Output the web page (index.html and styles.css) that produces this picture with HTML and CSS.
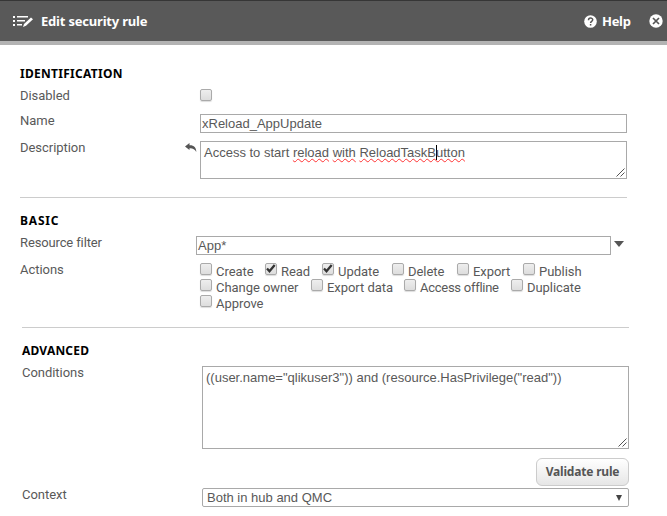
FILE: index.html
```html
<!DOCTYPE html>
<html lang="en">
<head>
<meta charset="utf-8">
<title>Edit security rule</title>
<link rel="stylesheet" href="styles.css">
</head>
<body>
<header class="bar">
  <svg class="edit-icon" width="21" height="13" viewBox="0 0 21 13"><path d="M0 1h2v2H0zM0 5h2v2H0zM0 9h2v2H0zM4 1h11v1.500H4zM4 5h8v1.500H4zM4 9h5v1.500H4z" fill="#fff"/><path d="M10 12l1-3 7-6.500 2 1.800-7 6.500z" fill="#fff"/></svg>
  <h1 class="title">Edit security rule</h1>
  <svg class="help-icon" width="13" height="13" viewBox="0 0 13 13"><circle cx="6.500" cy="6.500" r="6.300" fill="#fff"/><path d="M4.500 5.200C4.500 2.300 8.700 2.500 8.700 4.800c0 1.600-2.100 1.500-2.100 3.200M6.600 9v1.500" fill="none" stroke="#555" stroke-width="1.500"/></svg>
  <span class="help">Help</span>
  <svg class="close-icon" width="14" height="14" viewBox="0 0 14 14"><circle cx="7" cy="7" r="6.700" fill="#fff"/><path d="M4 4l6 6M10 4l-6 6" stroke="#555" stroke-width="1.700"/></svg>
</header>
<main>
  <section class="section identification">
    <h2 class="heading h-ident">IDENTIFICATION</h2>
    <div class="row disabled"><span class="label">Disabled</span><i class="check"></i></div>
    <div class="row name"><span class="label">Name</span><div class="field">xReload_AppUpdate</div></div>
    <div class="row description"><span class="label">Description</span>
      <svg class="undo" width="12" height="10" viewBox="0 0 12 10"><path d="M0 3.500L4.500 0v2.300C8.500 2 11.500 4.500 11.300 9 9.800 6 7.500 5 4.500 5.200V7z" fill="#555"/></svg>
      <div class="field area">Access to start <u>reload</u> <u>with</u> <u>ReloadTaskB<b class="cursor"></b>utton</u><svg class="grip" width="9" height="9" viewBox="0 0 9 9"><path d="M.5 8.500l8-8M4.500 8.500l4-4" stroke="#555"/></svg></div>
    </div>
  </section>
  <section class="section basic">
    <h2 class="heading h-basic">BASIC</h2>
    <div class="row filter"><span class="label">Resource filter</span><div class="field">App*</div><svg class="caret" width="10" height="6" viewBox="0 0 10 6"><path d="M0 0h10L5 6z" fill="#555"/></svg></div>
    <div class="row actions"><span class="label">Actions</span>
      <div class="options">
        <div class="option-row first">
          <span class="option"><i class="check"></i>Create</span>
          <span class="option"><i class="check on"><svg width="10" height="9" viewBox="0 0 10 9"><path d="M1 4.500l2.500 2.700L8.700 1" fill="none" stroke="#333" stroke-width="2.300"/></svg></i>Read</span>
          <span class="option"><i class="check on"><svg width="10" height="9" viewBox="0 0 10 9"><path d="M1 4.500l2.500 2.700L8.700 1" fill="none" stroke="#333" stroke-width="2.300"/></svg></i>Update</span>
          <span class="option"><i class="check"></i>Delete</span>
          <span class="option"><i class="check"></i>Export</span>
          <span class="option"><i class="check"></i>Publish</span>
        </div>
        <div class="option-row second">
          <span class="option"><i class="check"></i>Change owner</span>
          <span class="option"><i class="check"></i>Export data</span>
          <span class="option offline"><i class="check"></i>Access offline</span>
          <span class="option"><i class="check"></i>Duplicate</span>
        </div>
        <div class="option-row"><span class="option"><i class="check"></i>Approve</span></div>
      </div>
    </div>
  </section>
  <section class="section advanced">
    <h2 class="heading h-adv">ADVANCED</h2>
    <div class="row conditions"><span class="label">Conditions</span><div class="field area">((user.name="qlikuser3")) and (resource.HasPrivilege("read"))<svg class="grip" width="9" height="9" viewBox="0 0 9 9"><path d="M.5 8.500l8-8M4.500 8.500l4-4" stroke="#555"/></svg></div></div>
    <button class="validate">Validate rule</button>
    <div class="row context"><span class="label">Context</span><div class="field select">Both in hub and QMC<svg width="6" height="6" viewBox="0 0 6 6"><path d="M0 0h6L3 6z" fill="#444"/></svg></div></div>
  </section>
</main>
</body>
</html>
```
FILE: styles.css
```css
* { box-sizing: border-box; }
body { margin: 0; background: #fff; color: #595959; font: 13px/16px Roboto, "Liberation Sans", sans-serif; }
svg { display: block; flex: none; }
h1, h2 { margin: 0; }
.bar { height: 45px; display: flex; align-items: center; padding: 0 4px 0 13px; background: #595959; border-top: 1px solid #363636; border-bottom: 4px solid #b3b3b3; color: #fff; }
.title, .help { font: bold 13px/16px "Noto Sans", sans-serif; white-space: nowrap; }
.edit-icon { margin-right: 7px; }
.title { letter-spacing: -.2px; }
.help-icon { margin-left: auto; }
.help { width: 29px; margin: 0 18px 0 5px; letter-spacing: -.3px; }
.section { width: 607px; margin-left: 20px; }
.identification { height: 153px; padding-top: 21px; border-bottom: 1px solid #ccc; }
.basic { width: 609px; height: 129px; padding-top: 15px; }
.advanced { margin-left: 22px; border-top: 1px solid #ccc; padding-top: 15px; }
.heading { height: 16px; color: #000; font: bold 12px/16px "Noto Sans", sans-serif; }
.h-ident { letter-spacing: .28px; }
.h-basic { letter-spacing: .8px; }
.h-adv { letter-spacing: .2px; }
.row { display: flex; align-items: flex-start; }
.label { width: 180px; flex: none; letter-spacing: -.04px; }
.check { width: 12px; height: 12px; flex: none; border: 1px solid #aaa; border-radius: 2px; background: linear-gradient(#eee, #ddd); box-shadow: 0 1px 1px #ddd; }
.field { flex: 1; height: 19px; border: 1px solid #a9a9a9; padding: 1px 1px 0; font: 13px/16px "Liberation Sans", sans-serif; white-space: nowrap; }
.area { position: relative; padding: 3px 3px 0; }
.disabled { height: 32px; padding-top: 7px; }
.disabled .label { margin-top: -1px; }
.name { height: 27px; }
.name .label { margin-top: -1px; }
.description .label { width: 165px; margin-top: -1px; }
.undo { margin: 2px 3px 0 0; }
.description .area { height: 38px; }
.area u { text-decoration: underline wavy #f33 1px; text-decoration-skip-ink: none; text-underline-offset: 1px; }
.cursor { display: inline-block; width: 1px; height: 15px; margin-right: -1px; background: #000; vertical-align: -3px; }
.grip { position: absolute; right: 1px; bottom: 1px; }
.filter { height: 34px; padding-top: 7px; }
.filter .label { width: 176px; margin-top: -1px; letter-spacing: -.13px; }
.filter .field { flex: 0 0 415px; }
.caret { margin: 5px 0 0 3px; }
.actions .label { margin-top: -1px; }
.option-row { display: grid; height: 16px; }
.first { grid-template-columns: 65px 57px 70px 65px 66px 60px; }
.second { grid-template-columns: 111px 93px 107px 72px; }
.option { display: flex; gap: 4px; line-height: 17px; letter-spacing: -.05px; white-space: nowrap; }
.offline { letter-spacing: -.27px; }
.conditions { padding-top: 7px; }
.conditions .label { margin-top: -1px; }
.conditions .area { height: 83px; }
.validate { display: block; width: 93px; height: 28px; margin: 9px 0 2px auto; padding: 0; border: 1px solid #ccc; border-radius: 6px; background: linear-gradient(#fff, #e6e6e6); color: #555; font: bold 12px/16px "Noto Sans", sans-serif; letter-spacing: -.2px; }
.select { display: flex; justify-content: space-between; align-items: center; padding: 0 6px 0 4px; border-radius: 2px; }
.context .label { margin-top: -1px; }
```
